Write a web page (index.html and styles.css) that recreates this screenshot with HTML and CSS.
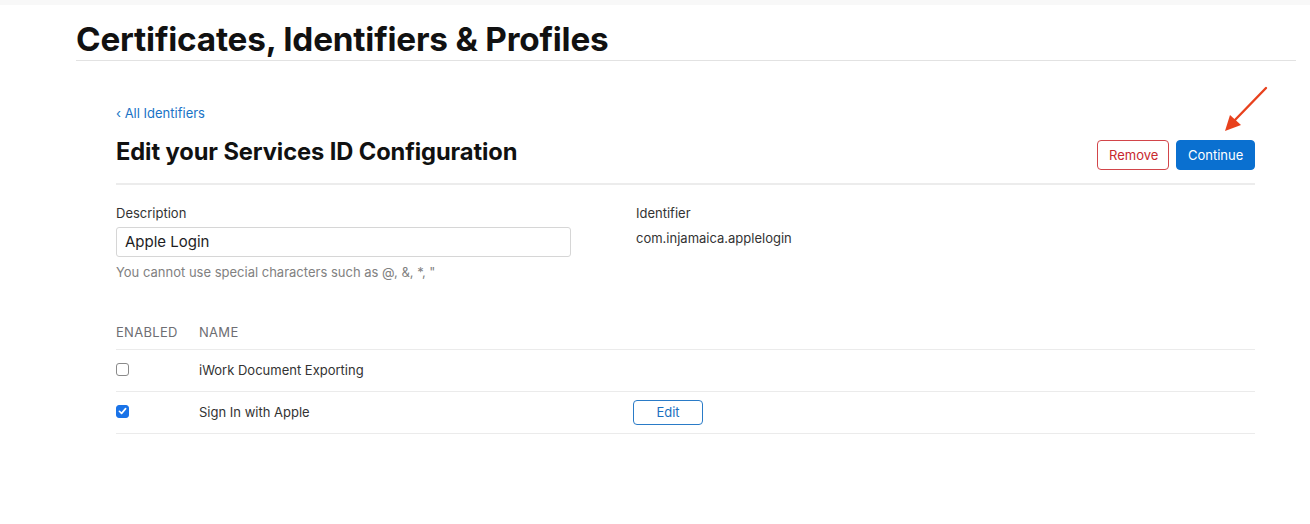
FILE: index.html
```html
<!DOCTYPE html>
<html>
<head>
<meta charset="utf-8">
<link rel="stylesheet" href="styles.css">
</head>
<body>
<div class="topbar"></div>
<header class="page-head">
  <h1 class="page-title">Certificates, Identifiers &amp; Profiles</h1>
</header>
<main class="content">
  <a class="back" href="#">‹ All Identifiers</a>
  <div class="title-row">
    <h2 class="section-title">Edit your Services ID Configuration</h2>
    <div class="actions">
      <button class="btn btn-remove">Remove</button>
      <button class="btn btn-continue">Continue</button>
      <svg class="arrow" width="50" height="52" viewBox="0 0 50 52">
        <line x1="46" y1="3" x2="14" y2="36" stroke="#e8411d" stroke-width="2.4" stroke-linecap="round"/>
        <polygon points="5,46 10,30 21,40" fill="#e8411d"/>
      </svg>
    </div>
  </div>
  <div class="fields">
    <div class="field desc">
      <div class="label">Description</div>
      <div class="input">Apple Login</div>
      <div class="help">You cannot use special characters such as @, &amp;, *, "</div>
    </div>
    <div class="field ident">
      <div class="label">Identifier</div>
      <div class="value">com.injamaica.applelogin</div>
    </div>
  </div>
  <div class="table">
    <div class="row head">
      <div class="c1">ENABLED</div>
      <div class="c2">NAME</div>
    </div>
    <div class="row">
      <div class="c1"><span class="cb"></span></div>
      <div class="c2">iWork Document Exporting</div>
    </div>
    <div class="row">
      <div class="c1"><span class="cb checked"><svg width="12" height="12" viewBox="0 0 12 12"><path d="M2.6 6.3 L5 8.6 L9.4 3.4" fill="none" stroke="#fff" stroke-width="1.8" stroke-linecap="round" stroke-linejoin="round"/></svg></span></div>
      <div class="c2">Sign In with Apple</div>
      <div class="c3"><button class="btn btn-edit">Edit</button></div>
    </div>
  </div>
</main>
</body>
</html>
```
FILE: styles.css
```css
* { box-sizing: border-box; }
body {
  margin: 0;
  background: #fff;
  font-family: Inter, "Liberation Sans", sans-serif;
  color: #1d1d1f;
  width: 1310px;
  height: 524px;
  overflow: hidden;
}
.topbar { height: 5px; background: #f8f8f8; }
.page-head {
  margin: 0 14px 0 76px;
  border-bottom: 1px solid #e2e2e2;
  height: 56px;
  display: flex;
  align-items: flex-end;
}
.page-title {
  margin: 0 0 -1px 0;
  font-size: 33.3px;
  font-weight: 700;
  letter-spacing: -0.2px;
  line-height: 44px;
  color: #111;
}
.content {
  margin: 0 55px 0 116px;
  padding-top: 44px;
}
.back {
  display: block;
  color: #1a73c6;
  text-decoration: none;
  font-size: 13px;
  line-height: 16px;
}
.title-row {
  display: flex;
  align-items: flex-end;
  justify-content: space-between;
  border-bottom: 2px solid #ececec;
  height: 64px;
  padding-bottom: 13px;
}
.section-title {
  margin: 0 0 3px 0;
  font-size: 23.7px;
  font-weight: 700;
  line-height: 30px;
  color: #111;
  letter-spacing: -0.1px;
}
.actions { display: flex; gap: 7px; position: relative; }
.arrow { position: absolute; right: -15px; top: -55px; }
.btn {
  font-family: Inter, "Liberation Sans", sans-serif;
  font-size: 13px;
  border-radius: 4px;
  height: 30px;
  padding: 0 11px;
  cursor: pointer;
}
.btn-remove {
  background: #fff;
  color: #c8282e;
  border: 1px solid #d2454a;
  width: 72px;
}
.btn-continue {
  background: #0a70d0;
  color: #fff;
  border: 1px solid #0a70d0;
  width: 79px;
}
.fields {
  display: flex;
  padding-top: 20px;
}
.field .label {
  font-size: 13px;
  color: #333;
  line-height: 16px;
}
.desc { width: 520px; }
.input {
  margin-top: 6px;
  width: 455px;
  height: 30px;
  border: 1px solid #d6d6d6;
  border-radius: 3px;
  padding: 0 8px;
  font-size: 15px;
  line-height: 28px;
  color: #1d1d1f;
}
.help {
  margin-top: 7px;
  font-size: 13px;
  color: #818181;
  line-height: 16px;
}
.value {
  margin-top: 9px;
  font-size: 13px;
  color: #333;
  line-height: 16px;
}
.table { margin-top: 44px; }
.row {
  display: flex;
  align-items: center;
  height: 42px;
  border-bottom: 1px solid #ebebeb;
  font-size: 13px;
  color: #333;
}
.row.head {
  height: 26px;
  align-items: flex-start;
  color: #6e6e73;
  letter-spacing: 0.3px;
}
.c1 { width: 83px; display: flex; align-items: center; }
.c2 { width: 434px; }
.row:not(.head) { padding-bottom: 1px; }
.cb {
  display: inline-flex;
  align-items: center;
  justify-content: center;
  width: 13px;
  height: 13px;
  border: 1px solid #8a8a8a;
  border-radius: 3px;
  background: #fff;
  margin-top: -2px;
}
.cb.checked {
  background: #1a73e8;
  border-color: #1a73e8;
}
.btn-edit {
  background: #fff;
  border: 1px solid #2a7bc7;
  color: #1a6fc0;
  width: 70px;
  height: 25px;
  font-size: 13px;
  padding: 0;
}
```
